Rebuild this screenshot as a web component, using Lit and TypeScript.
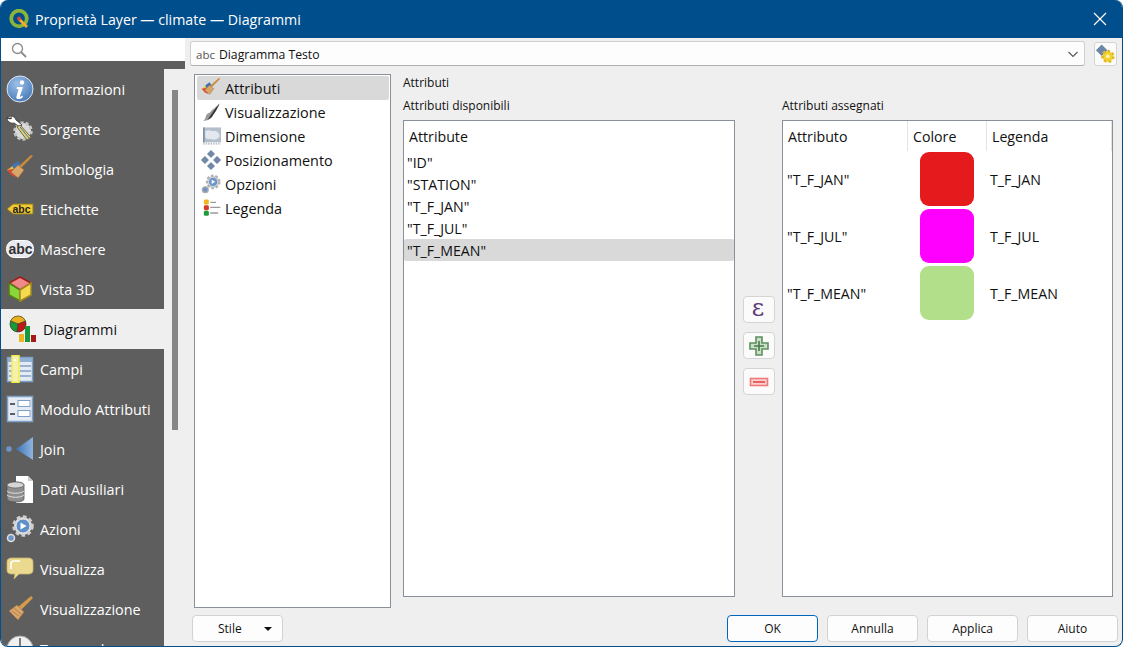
import { LitElement, html, css, svg } from "lit";
import { customElement } from "lit/decorators.js";

const ic = (s: number, body: unknown) => html`<svg width=${s} height=${s} viewBox="0 0 28 28">${body}</svg>`;

const gear = (cx: number, cy: number, r: number, fill: string, stroke: string) => svg`<circle cx=${cx} cy=${cy} r=${r} fill=${fill} stroke=${stroke} stroke-width=${r * 0.55} stroke-dasharray="${r * 0.5} ${r * 0.4}"/><circle cx=${cx} cy=${cy} r=${r * 0.78} fill=${fill}/>`;

const icons: Record<string, unknown> = {
  info: svg`<defs><radialGradient id="ig" cx=".4" cy=".3" r=".8"><stop offset="0" stop-color="#9dc0e8"/><stop offset="1" stop-color="#3f74b5"/></radialGradient></defs><circle cx="14" cy="14" r="13" fill="url(#ig)" stroke="#dce6f2"/><circle cx="16" cy="7.5" r="2.2" fill="#fff"/><path d="M11 12h6l-3 9c0 1 1 1 3-.5l-.5 2c-3 2-7 2.500-6-1l2-7.500h-2Z" fill="#fff"/>`,
  src: svg`<circle cx="17" cy="16" r="8" fill="#e8e8e8" stroke="#c4c4c4" stroke-width="3.500" stroke-dasharray="3 2"/><circle cx="17" cy="16" r="6.500" fill="#d9d9d9"/><path d="M1 3c3-3 8-2 9 2l6 5-2 2-6-4c-4 1-7-2-7-5l3 1 2-1Z" fill="#fff" stroke="#333" stroke-width=".8"/><path d="M11 12l3-2 11 12-4 3Z" fill="#e6cf72" stroke="#6f6a45"/><path d="M14 12l9 11" stroke="#3f74b5" stroke-width="1"/>`,
  sym: svg`<path d="M1 15l10-7 4 5-9 7Z" fill="#e8c53a"/><path d="M1 15l4 5 4 2 4-4-6-4Z" fill="#d6453a"/><path d="M6 10l6-4 3 4-7 5Z" fill="#3f74b5"/><path d="M27 1l-12 12-2-2L25 0Z" fill="#c98a3c"/><path d="M12 10l6 5-6 8-7-6Z" fill="#d8a56a" stroke="#a8703a" stroke-width=".6"/>`,
  lab: svg`<path d="M1 14l6-5h20v10H7Z" fill="#f2c92e" stroke="#8c7a20"/><text x="6.500" y="18" font-family="Liberation Sans" font-weight="700" font-size="10.500" fill="#222">abc</text>`,
  mask: svg`<rect x=".5" y="5.500" width="27" height="17" rx="8" fill="#e8eaf2" stroke="#fff"/><text x="2.500" y="19" font-family="Liberation Sans" font-weight="700" font-size="14" fill="#333">abc</text>`,
  d3: svg`<path d="M14 2l11 6-11 7-11-7Z" fill="#f08a8a" stroke="#a01818" stroke-width="1.500"/><path d="M3 8l11 7v11L3 20Z" fill="#8ad63a" stroke="#587a1e" stroke-width="1.500"/><path d="M25 8l-11 7v11l11-6Z" fill="#f5d94e" stroke="#a88a20" stroke-width="1.500"/>`,
  diag: svg`<circle cx="9" cy="9" r="8" fill="#e8b020"/><path d="M9 9L1.500 6A8 8 0 0 0 8 17Z" fill="#169a3a"/><path d="M9 9L8 17A8 8 0 0 0 16.500 6Z" fill="#c41818"/><path d="M9 9L1.500 6A8 8 0 0 1 16.500 6Z" fill="#e8b020"/><path d="M9 9L1.500 6M9 9L8 17M9 9L16.500 6" stroke="#333" stroke-width=".8"/><circle cx="9" cy="9" r="8" fill="none" stroke="#333" stroke-width=".6"/><rect x="10" y="19" width="5" height="8" fill="#f2b41e"/><rect x="16" y="11" width="5" height="16" fill="#17983a"/><rect x="22" y="20" width="5" height="7" fill="#a81818"/>`,
  fields: svg`<rect x="1.500" y="2.500" width="25" height="24" fill="#e4ebf5" stroke="#7fa0c6" stroke-width="1.500"/><rect x="2" y="3" width="24" height="4" fill="#8fb0d4"/><path d="M14 11h11M14 16h11M14 21h11M3 11h3M3 16h3M3 21h3" stroke="#7fa0c6" stroke-width="1.500"/><rect x="6" y="0.500" width="7" height="27" fill="#f5f0b0" stroke="#f2ee44" stroke-width="1.500"/><rect x="8" y="4" width="2" height="2" fill="#fff"/>`,
  form: svg`<rect x="1.500" y="1.500" width="25" height="25" fill="#e4ebf5" stroke="#7fa0c6" stroke-width="1.500"/><path d="M4 9h5M4 19h5" stroke="#333" stroke-width="1.500"/><rect x="12" y="5.500" width="12" height="6" fill="#fff" stroke="#7fa0c6"/><rect x="12" y="15.500" width="12" height="6" fill="#fff" stroke="#7fa0c6"/>`,
  join: svg`<defs><linearGradient id="jg" x1="0" x2="1"><stop offset="0" stop-color="#3f74b5"/><stop offset="1" stop-color="#8fb4de"/></linearGradient></defs><circle cx="3" cy="14" r="2.800" fill="#6c94c8"/><path d="M27 2v23L10 14Z" fill="url(#jg)"/>`,
  aux: svg`<path d="M10 1h12l5 5v22H10Z" fill="#fff"/><path d="M22 1v5h5" fill="#ccc"/><path d="M1 10c0-4 17-4 17 0v14c0 4-17 4-17 0Z" fill="#8e8e8e" stroke="#555" stroke-width=".8"/><ellipse cx="9.500" cy="10" rx="8.500" ry="3" fill="#d5d5d5" stroke="#555" stroke-width=".6"/><path d="M1 16c3 3 14 3 17 0M1 20c3 3 14 3 17 0" stroke="#e0e0e0" fill="none"/>`,
  act: svg`<circle cx="17" cy="11" r="9" fill="#ddd" stroke="#cfcfcf" stroke-width="3.500" stroke-dasharray="3.500 2.500"/><circle cx="17" cy="11" r="7" fill="#5f8fc8" stroke="#e8e8e8"/><path d="M14.500 7.500l6 3.500-6 3.500Z" fill="#fff"/><circle cx="5" cy="23" r="3.500" fill="#6c94c8" stroke="#ddd" stroke-width="1.600"/>`,
  tip: svg`<path d="M6 3h16c3 0 5 1 5 4v8c0 3-2 4-5 4H13l-5 5 1-5H6c-3 0-5-1-5-4V7c0-3 2-4 5-4Z" fill="#ead98e" stroke="#c7b86e" stroke-width=".8"/><path d="M5 14V9c0-2 1-3 3-3h6" stroke="#fff" stroke-width="1.500" fill="none"/>`,
  rend: svg`<path d="M25 1l2 2L15 15l-3-3Z" fill="#d69a4c"/><path d="M11 10l7 7-6 8-9-9Z" fill="#d8a56a" stroke="#a8703a" stroke-width=".6"/><path d="M6 16l7 5M8 13l7 6" stroke="#a8703a" stroke-width=".7"/>`,
  time: svg`<circle cx="14" cy="14" r="13" fill="#f0f0f0" stroke="#aaa"/><path d="M14 3v11M14 14H5" stroke="#555" stroke-width="1.500"/>`,
  brush: svg`<path d="M26 2C22 6 15 11 12 15c-3 0-5 3-6 8-1 2-3 3-4 3 7 1 13-2 15-8 3-4 7-11 9-16Z" fill="#999"/><path d="M26 2c-2 5-6 12-9 16-1 3-4 5-8 7 4-5 9-14 17-23Z" fill="#333"/>`,
  size: svg`<rect x="3" y="2" width="25" height="21" fill="#b4bfce"/><path d="M6 7c5-3 9 1 13 0s6 3 7 6-5 7-9 6-8 0-11-3Z" fill="#e4e8ee"/><rect x="3" y="2" width="2" height="21" fill="#76879e"/><path d="M3 25h25" stroke="#aaa" stroke-width="2" stroke-dasharray="2 1.500"/>`,
  pos: svg`<path d="M14 0l5.500 5.500-5.500 5.500-5.500-5.500Z M14 17l5.500 5.500-5.500 5.500-5.500-5.500Z M0 14l5.500-5.500 5.500 5.500-5.500 5.500Z M28 14l-5.500-5.500-5.500 5.500 5.500 5.500Z" fill="#7288a6" stroke="#a0b2c8" stroke-width=".6"/>`,
  opt: svg`<circle cx="17" cy="11" r="8.500" fill="#ccc" stroke="#b0b0b0" stroke-width="3.500" stroke-dasharray="3.500 2.500"/><circle cx="17" cy="11" r="6.500" fill="#6c94c8" stroke="#e8e8e8"/><path d="M15 8l5 3-5 3Z" fill="#fff"/><circle cx="6" cy="22" r="4" fill="#6c94c8" stroke="#aaa" stroke-width="2"/>`,
  leg: svg`<rect x="4" y="2" width="7" height="7" rx="2" fill="#f2b41e"/><rect x="4" y="10" width="7" height="7" rx="2" fill="#d63a2a"/><rect x="4" y="18" width="7" height="7" rx="2" fill="#1f9a3c"/><path d="M13 6h8M13 13h14M13 21h11" stroke="#9a9a9a" stroke-width="1.800"/>`,
};

const side: [string, string][] = [
  ["Informazioni", "info"], ["Sorgente", "src"], ["Simbologia", "sym"], ["Etichette", "lab"], ["Maschere", "mask"],
  ["Vista 3D", "d3"], ["Diagrammi", "diag"], ["Campi", "fields"], ["Modulo Attributi", "form"], ["Join", "join"],
  ["Dati Ausiliari", "aux"], ["Azioni", "act"], ["Visualizza", "tip"], ["Visualizzazione", "rend"], ["Temporale", "time"],
];
const tabs: [string, string][] = [
  ["Attributi", "sym"], ["Visualizzazione", "brush"], ["Dimensione", "size"], ["Posizionamento", "pos"], ["Opzioni", "opt"], ["Legenda", "leg"],
];
const rows: [string, string, string][] = [
  ['"T_F_JAN"', "#e41a1c", "T_F_JAN"],
  ['"T_F_JUL"', "#ff00ff", "T_F_JUL"],
  ['"T_F_MEAN"', "#b2df8a", "T_F_MEAN"],
];

@customElement("app-root")
export class AppRoot extends LitElement {
  static styles = css`
    :host { display: block; width: 1123px; height: 647px; font-family: "Open Sans", "Noto Sans", sans-serif; font-size: 13.5px; color: #111; background: #fff; overflow: hidden; }
    * { box-sizing: border-box; }
    .win { width: 1123px; height: 647px; display: flex; flex-direction: column; background: #efefef; border: 1px solid #004e8c; border-top: 0; border-radius: 8px; overflow: hidden; }
    .title { height: 38px; flex: none; background: #004e8c; color: #fff; display: flex; align-items: center; padding: 0 0 0 9px; font-size: 14.2px; gap: 6px; margin: 0 -1px; }
    .title .t { flex: 1; }
    .close { width: 46px; height: 38px; display: flex; align-items: center; justify-content: center; }
    .body { flex: 1; display: flex; min-height: 0; }
    .left { width: 184px; flex: none; display: flex; flex-direction: column; min-height: 0; }
    .search { height: 23px; flex: none; background: #fff; display: flex; align-items: center; padding-left: 10px; }
    .strip { height: 8px; flex: none; background: #5e5e5e; }
    .lrow { flex: 1; display: flex; min-height: 0; }
    .side { width: 163px; flex: none; background: #5e5e5e; overflow: hidden; }
    .si { height: 40px; display: flex; align-items: center; gap: 6px; padding-left: 5px; color: #fff; font-size: 14.4px; }
    .si.on { background: #efefef; color: #111; padding-left: 8px; gap: 6px; }
    .sb { flex: 1; padding: 21px 0 0 8px; }
    .thumb { width: 6px; height: 340px; background: #868686; }
    .right { flex: 1; min-width: 0; display: flex; flex-direction: column; padding: 3px 4px 4px 5px; }
    .top { display: flex; gap: 9px; height: 25px; flex: none; align-items: flex-start; }
    .combo { flex: 1; height: 25px; background: #fdfdfd; border: 1px solid #d0d0d0; border-bottom-color: #b0b0b0; border-radius: 3px; display: flex; align-items: center; padding: 1px 6px 0 5px; font-size: 12.2px; gap: 4px; }
    .combo .abc { color: #555; font-size: 11.5px; }
    .combo .n { flex: 1; }
    .gearb { width: 23px; height: 24px; margin: 1px 1px 0 0; background: #fbfbfb; border: 1px solid #d4d4d4; border-radius: 3px; display: flex; align-items: center; justify-content: center; }
    .main { flex: 1; display: flex; min-height: 0; padding: 8px 4px 0 4px; gap: 12px; }
    .tabs { width: 197px; flex: none; height: 534px; background: #fff; border: 1px solid #8a9099; padding: 1px 1px 1px 2px; }
    .ti { height: 24px; display: flex; align-items: center; gap: 4px; padding-left: 4px; font-size: 14.4px; border-radius: 2px; }
    .ti.on { background: #d9d9d9; }
    .panel { flex: 1; min-width: 0; display: flex; flex-direction: column; }
    .ph { height: 17px; font-size: 12px; line-height: 17px; flex: none; }
    .cols { flex: none; height: 515px; padding-top: 5px; display: flex; }
    .col { display: flex; flex-direction: column; }
    .col.a { width: 332px; }
    .col.b { width: 331px; }
    .cl { height: 21px; flex: none; font-size: 12px; line-height: 14px; margin-top: 3px; }
    .box { height: 477px; flex: none; background: #fff; border: 1px solid #8a9099; overflow: hidden; }
    .lh { height: 30px; padding: 1px 0 0 5px; display: flex; align-items: center; font-size: 14.2px; }
    .lr { height: 22px; display: flex; align-items: center; padding-left: 3px; font-size: 14.2px; border-radius: 2px; }
    .lr.on { background: #d9d9d9; }
    .mid { width: 47px; flex: none; display: flex; flex-direction: column; gap: 9px; padding: 200px 0 0 8px; }
    .tb { width: 32px; height: 27px; background: #fbfbfb; border: 1px solid #d4d4d4; border-radius: 4px; display: flex; align-items: center; justify-content: center; }
    .eps { font-family: "DejaVu Serif", serif; font-size: 24px; color: #5b3a7a; line-height: 1; margin: -4px 2px 0 0; }
    .thead { display: grid; grid-template-columns: 125px 79px 1fr; height: 30px; }
    .thead div { display: flex; align-items: center; padding-left: 5px; font-size: 14.2px; border-right: 1px solid #e3e3e3; }
    .tr { display: grid; grid-template-columns: 125px 79px 1fr; height: 57px; align-items: center; font-size: 14.2px; }
    .tr .a1 { padding-left: 4px; }
    .tr .a3 { padding-left: 3px; }
    .sw { width: 54px; height: 54px; border-radius: 9px; margin: -1px 0 0 12px; }
    .foot { height: 27px; flex: none; display: flex; align-items: center; margin-top: 7px; }
    .btn { height: 27px; width: 91px; background: #fdfdfd; border: 1px solid #d2d2d2; border-radius: 4px; display: flex; align-items: center; justify-content: center; font-size: 12px; margin-left: 9px; }
    .btn.ok { border-color: #0067c0; margin-left: 0; }
    .stile { width: 91px; height: 27px; background: #fdfdfd; border: 1px solid #d2d2d2; border-radius: 4px; display: flex; align-items: center; font-size: 12px; padding-left: 25px; margin-left: 2px; margin-right: auto; }
    .stile i { margin-left: 22px; width: 0; height: 0; border: 4px solid transparent; border-top: 4px solid #111; border-bottom: 0; }
  `;

  render() {
    return html`<div class="win">
      <div class="title">
        <svg width="20" height="20" viewBox="0 0 20 20"><circle cx="10" cy="9.500" r="7.800" fill="none" stroke="#8ab43a" stroke-width="3.800"/><path d="M10 10l8 8" stroke="#f0ad2e" stroke-width="3"/><circle cx="10" cy="9.500" r="2" fill="#d9453a"/></svg>
        <span class="t">Proprietà Layer — climate — Diagrammi</span>
        <div class="close"><svg width="14" height="14" viewBox="0 0 14 14"><path d="M1 1l12 12M13 1L1 13" stroke="#fff" stroke-width="1.200"/></svg></div>
      </div>
      <div class="body">
        <div class="left">
          <div class="search"><svg width="16" height="16" viewBox="0 0 16 16"><circle cx="6.500" cy="6.500" r="5" fill="none" stroke="#8a8a8a" stroke-width="1.300"/><path d="M10 10l5 5" stroke="#8a8a8a" stroke-width="1.800"/></svg></div>
          <div class="strip"></div>
          <div class="lrow">
            <div class="side">${side.map(([n, i]) => html`<div class="si ${n === "Diagrammi" ? "on" : ""}">${ic(28, icons[i])}<span>${n}</span></div>`)}</div>
            <div class="sb"><div class="thumb"></div></div>
          </div>
        </div>
        <div class="right">
          <div class="top">
            <div class="combo"><span class="abc">abc</span><span class="n">Diagramma Testo</span>
              <svg width="10" height="7" viewBox="0 0 10 7"><path d="M.5 1l4.500 4.500L9.500 1" fill="none" stroke="#555" stroke-width="1.100"/></svg></div>
            <div class="gearb"><svg width="22" height="22" viewBox="0 0 22 22"><path d="M7 1l6 6-6 6-6-6Z" fill="#6b86a8"/>${gear(13.500, 13.500, 5.500, "#f2d22e", "#e0b820")}<circle cx="13.500" cy="13.500" r="2" fill="#fbf3b0"/></svg></div>
          </div>
          <div class="main">
            <div class="tabs">${tabs.map(([n, i], k) => html`<div class="ti ${k === 0 ? "on" : ""}">${ic(20, icons[i])}<span>${n}</span></div>`)}</div>
            <div class="panel">
              <div class="ph">Attributi</div>
              <div class="cols">
                <div class="col a">
                  <div class="cl">Attributi disponibili</div>
                  <div class="box">
                    <div class="lh">Attribute</div>
                    ${['"ID"', '"STATION"', '"T_F_JAN"', '"T_F_JUL"', '"T_F_MEAN"'].map((t) => html`<div class="lr ${t === '"T_F_MEAN"' ? "on" : ""}">${t}</div>`)}
                  </div>
                </div>
                <div class="mid">
                  <div class="tb"><span class="eps">ε</span></div>
                  <div class="tb"><svg width="24" height="24" viewBox="0 0 24 24"><path d="M9 3h6v6h6v6h-6v6H9v-6H3V9h6Z" fill="#c8dfc8" stroke="#5e8f5e" stroke-width="1.600"/><path d="M12 7v10M7 12h10" stroke="#4a7a4a" stroke-width="1.600"/></svg></div>
                  <div class="tb"><svg width="20" height="10" viewBox="0 0 20 10"><rect x="1.500" y="1.500" width="17" height="7" fill="#f9d0d0" stroke="#f07a7a" stroke-width="1.600"/><rect x="4" y="4" width="12" height="2" fill="#e86060"/></svg></div>
                </div>
                <div class="col b">
                  <div class="cl">Attributi assegnati</div>
                  <div class="box">
                    <div class="thead"><div>Attributo</div><div>Colore</div><div>Legenda</div></div>
                    ${rows.map(([a, c, l]) => html`<div class="tr"><div class="a1">${a}</div><div><div class="sw" style="background:${c}"></div></div><div class="a3">${l}</div></div>`)}
                  </div>
                </div>
              </div>
            </div>
          </div>
          <div class="foot">
            <div class="stile">Stile<i></i></div>
            <div class="btn ok">OK</div><div class="btn">Annulla</div><div class="btn">Applica</div><div class="btn">Aiuto</div>
          </div>
        </div>
      </div>
    </div>`;
  }
}
